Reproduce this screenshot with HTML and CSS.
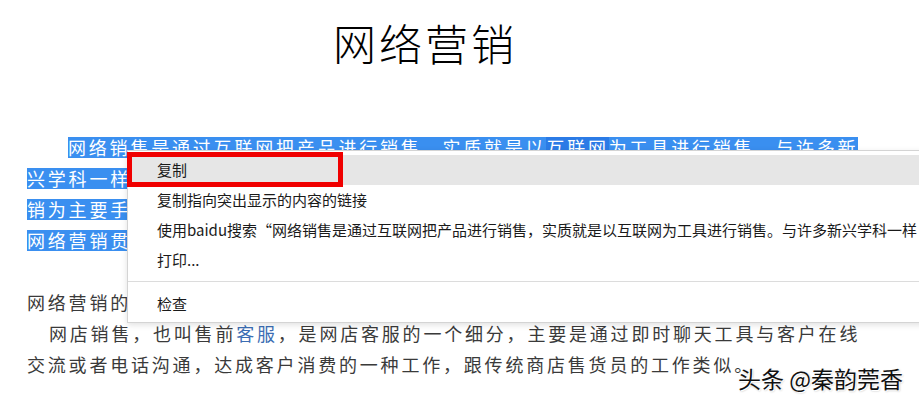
FILE: index.html
```html
<!DOCTYPE html>
<html lang="zh-CN">
<head>
    <meta charset="UTF-8">
    <title>网络营销</title>
    <link rel="stylesheet" href="styles.css">
</head>
<body>
<!-- 文章 -->
<div class="article">
    <h1 class="title">网络营销</h1>
    <p class="para first"><span class="sel">网络销售是通过互联网把产品进行销售，实质就是以<span class="sel-link">互联网</span>为工具进行销售，与许多新</span><br><span class="sel">兴学科一样</span><br><span class="sel">销为主要手</span><br><span class="sel">网络营销贯</span></p>
    <p class="para">网络营销的</p>
    <p class="para second">网店销售，也叫售前<a class="link" href="#">客服</a>，是网店客服的一个细分，主要是通过即时聊天工具与客户在线<br>交流或者电话沟通，达成客户消费的一种工作，跟传统商店售货员的工作类似。</p>
</div>

<!-- 右键菜单 -->
<div class="context-menu">
    <div class="menu-item active">复制</div>
    <div class="menu-item">复制指向突出显示的内容的链接</div>
    <div class="menu-item">使用baidu搜索“网络销售是通过互联网把产品进行销售，实质就是以互联网为工具进行销售。与许多新兴学科一样</div>
    <div class="menu-item">打印...</div>
    <div class="menu-sep"></div>
    <div class="menu-item">检查</div>
</div>
<div class="mark-box"></div>

<div class="watermark">头条 @秦韵莞香</div>
</body>
</html>
```

FILE: styles.css
```css
* {
    margin: 0;
    padding: 0;
    box-sizing: border-box;
}

body {
    font-family: "Noto Sans CJK SC", "Noto Sans", sans-serif;
    background: #fff;
    width: 919px;
    height: 407px;
    overflow: hidden;
    position: relative;
}

/* 文章 */
.article {
    padding-left: 27px;
}

.title {
    font-size: 43px;
    font-weight: 300;
    line-height: 60px;
    color: #000;
    padding-left: 306px;
    margin-top: 12px;
    margin-bottom: 60px;
    letter-spacing: 3px;
}

.para {
    font-size: 18px;
    line-height: 31px;
    letter-spacing: 2.8px;
    color: #3a3a3a;
    white-space: nowrap;
}

.para.first {
    text-indent: 41px;
    margin-bottom: 31px;
}

.para.second {
    text-indent: 22px;
}

.sel {
    color: #fff;
    background: linear-gradient(#3a8ff0, #3a8ff0) 0 55% / 100% 21px no-repeat;
}

.sel-link {
    background: linear-gradient(#2b7be6, #2b7be6) 0 55% / 100% 21px no-repeat;
}

.link {
    color: #3b6db3;
    text-decoration: none;
}

/* 右键菜单 */
.context-menu {
    position: absolute;
    left: 127px;
    top: 150px;
    width: 820px;
    background: #fff;
    border: 1px solid #d4d4d4;
    padding: 4px 0 3px;
    box-shadow: 0 2px 6px rgba(0,0,0,0.12);
    font-size: 15px;
    color: #1a1a1a;
    overflow: hidden;
}

.menu-item {
    height: 30px;
    line-height: 30px;
    padding-left: 29px;
    white-space: nowrap;
}

.menu-item.active {
    background: #e6e6e6;
}

.menu-sep {
    height: 1px;
    background: #dcdcdc;
    margin: 6px 0 7px;
}

.mark-box {
    position: absolute;
    left: 127px;
    top: 152px;
    width: 216px;
    height: 35px;
    border: 5px solid #f00000;
}

.watermark {
    position: absolute;
    left: 738px;
    top: 362px;
    font-size: 23px;
    line-height: 32px;
    color: #111;
    text-shadow: 1px 1px 0 #fff, -1px -1px 0 #fff, 1px 1px 2px rgba(0,0,0,0.3);
    white-space: nowrap;
}
```
